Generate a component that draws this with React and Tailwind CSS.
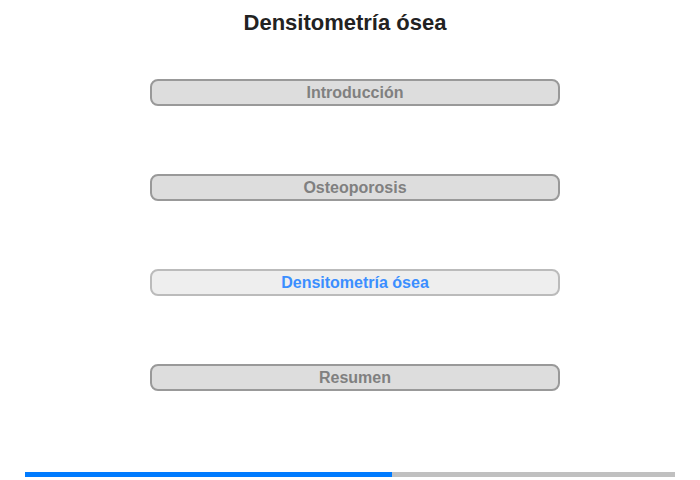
import React from "react";

const sections = [
  { label: "Introducción", active: false },
  { label: "Osteoporosis", active: false },
  { label: "Densitometría ósea", active: true },
  { label: "Resumen", active: false },
];

export default function App() {
  return (
    <div
      className="w-[700px] h-[480px] bg-white flex flex-col items-center"
      style={{ fontFamily: '"Liberation Sans", Arial, sans-serif' }}
    >
      <h1 className="mt-[10px] mr-[10px] text-[22px] leading-[26px] font-bold text-[#222]">Densitometría ósea</h1>

      <div className="mt-[43px] ml-[10px] flex flex-col gap-[68px]">
        {sections.map((s) => (
          <button
            key={s.label}
            className={
              s.active
                ? "w-[410px] h-[27px] rounded-lg border-2 border-[#bbb] bg-[#eee] text-[#3b8eff] text-base font-bold leading-none"
                : "w-[410px] h-[27px] rounded-lg border-2 border-[#999] bg-[#ddd] text-[#808080] text-base font-bold leading-none"
            }
          >
            {s.label}
          </button>
        ))}
      </div>

      <div className="mt-auto mb-[3px] w-[650px] h-[5px] flex bg-[#c0c0c0]">
        <div className="w-[367px] h-full bg-[#007bff]" />
      </div>
    </div>
  );
}
